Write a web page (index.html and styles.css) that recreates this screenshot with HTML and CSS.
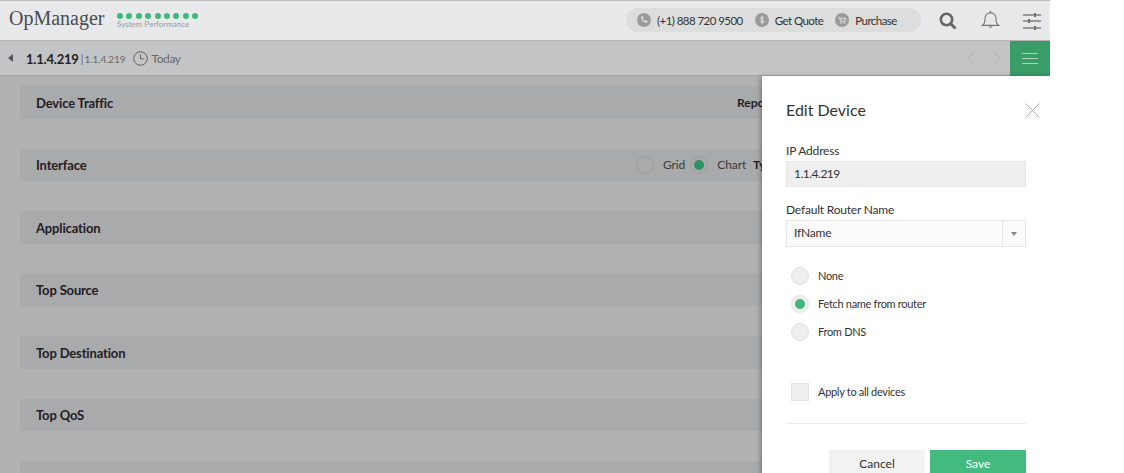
FILE: index.html
```html
<!DOCTYPE html>
<html lang="en">
<head>
<meta charset="utf-8">
<title>OpManager</title>
<link rel="stylesheet" href="styles.css">
</head>
<body>
<div class="app">
  <header class="topbar">
    <div class="logo">OpManager</div>
    <div class="health">
      <div class="dots"><i></i><i></i><i></i><i></i><i></i><i></i><i></i><i></i><i></i></div>
      <div class="health-label">System Performance</div>
    </div>
    <div class="pill">
      <span class="pill-item">
        <svg class="pill-icon" viewBox="0 0 14 14"><circle cx="7" cy="7" r="7" fill="#9b9b9b"/><path d="M4.2 3.6l1.4-.6 1 2-.9.8c.3.9 1.1 1.8 2.1 2.2l.8-.9 2 1-.6 1.5c-3 .6-6.400-2.800-5.800-6z" fill="#e2e2e2"/></svg>
        <span>(+1) 888 720 9500</span>
      </span>
      <span class="pill-item">
        <svg class="pill-icon" viewBox="0 0 14 14"><circle cx="7" cy="7" r="7" fill="#9b9b9b"/><path d="M9 5c-.3-.8-3.600-1.100-3.600.6 0 1.700 3.600.9 3.600 2.700 0 1.700-3.400 1.400-3.800.4M7 2.800v8.400" fill="none" stroke="#e2e2e2" stroke-width="1"/></svg>
        <span>Get Quote</span>
      </span>
      <span class="pill-item">
        <svg class="pill-icon" viewBox="0 0 14 14"><circle cx="7" cy="7" r="7" fill="#9b9b9b"/><path d="M3.300 4.300h1.300l1 4h4.200l.9-3H5" fill="none" stroke="#e2e2e2" stroke-width="1"/><circle cx="6" cy="10" r=".8" fill="#e2e2e2"/><circle cx="9.500" cy="10" r=".8" fill="#e2e2e2"/></svg>
        <span>Purchase</span>
      </span>
    </div>
    <div class="tools">
      <svg class="tool tool-search" viewBox="0 0 18 18"><circle cx="7.500" cy="7.500" r="5.700" fill="none" stroke="#666" stroke-width="2.600"/><path d="M11.800 11.800l4.700 4.700" stroke="#666" stroke-width="3"/></svg>
      <svg class="tool tool-bell" viewBox="0 0 18 18"><path d="M1.500 14.500c1.800-1.500 2.300-3 2.300-6.500 0-3 2-5.300 5.200-5.300s5.200 2.300 5.200 5.300c0 3.500.5 5 2.300 6.500z" fill="none" stroke="#777" stroke-width="1.100"/><path d="M7.200 15.600c.4 1.700 3.200 1.700 3.600 0z" fill="#777"/><path d="M9 .8v2" stroke="#777" stroke-width="1.300"/></svg>
      <svg class="tool tool-sliders" viewBox="0 0 18 18"><path d="M0 3h18M0 9h18M0 16h18" stroke="#808080" stroke-width="1.500"/><path d="M12 1v4M6 7v4M12 14v4" stroke="#707070" stroke-width="2"/></svg>
    </div>
  </header>
  <nav class="subbar">
    <span class="back"></span>
    <strong class="ip">1.1.4.219</strong>
    <span class="sep">|</span>
    <span class="ip-sub">1.1.4.219</span>
    <svg class="clock" viewBox="0 0 15 15"><circle cx="7.500" cy="7.500" r="6.800" fill="none" stroke="#5f6062" stroke-width="1"/><path d="M7.500 3.500v4.300h3" fill="none" stroke="#5f6062" stroke-width="1"/></svg>
    <span class="today">Today</span>
    <div class="pager">
      <svg class="chev" viewBox="0 0 9 16"><path d="M8 1L1 8l7 7" fill="none" stroke="#aeafb1" stroke-width="1"/></svg>
      <svg class="chev" viewBox="0 0 9 16"><path d="M1 1l7 7-7 7" fill="none" stroke="#aeafb1" stroke-width="1"/></svg>
    </div>
    <button class="menu-btn" type="button" aria-label="Menu"><i></i><i></i><i></i></button>
  </nav>
  <main class="content">
    <section class="row"><h3>Device Traffic</h3><div class="row-side side-report"><b>Report</b></div></section>
    <section class="row"><h3>Interface</h3>
      <div class="row-side side-view">
        <span class="radio dim"></span><span class="opt">Grid</span>
        <span class="radio dim on"></span><span class="opt">Chart</span>
        <b>Type</b>
      </div>
    </section>
    <section class="row"><h3>Application</h3></section>
    <section class="row"><h3>Top Source</h3></section>
    <section class="row"><h3>Top Destination</h3></section>
    <section class="row"><h3>Top QoS</h3></section>
    <section class="row"><h3>Top Conversation</h3></section>
  </main>
  <aside class="panel">
    <div class="panel-head">
      <h2>Edit Device</h2>
      <svg class="close" viewBox="0 0 15 15"><path d="M.5.500l14 14M14.500.500l-14 14" stroke="#9a9a9a" stroke-width=".8"/></svg>
    </div>
    <label class="field-label">IP Address</label>
    <div class="input readonly">1.1.4.219</div>
    <label class="field-label second">Default Router Name</label>
    <div class="input select"><span class="select-value">IfName</span><span class="select-arrow"><i></i></span></div>
    <div class="radios">
      <div class="choice"><span class="radio"></span>None</div>
      <div class="choice"><span class="radio on"></span>Fetch name from router</div>
      <div class="choice"><span class="radio"></span>From DNS</div>
    </div>
    <div class="choice apply"><span class="check"></span>Apply to all devices</div>
    <hr class="rule">
    <div class="actions">
      <button class="btn cancel" type="button">Cancel</button>
      <button class="btn save" type="button">Save</button>
    </div>
  </aside>
</div>
</body>
</html>
```
FILE: styles.css
```css
* { box-sizing: border-box; }
html, body { margin: 0; padding: 0; height: 473px; overflow: hidden; background: #fff; }
body { font-family: Lato, "Open Sans", sans-serif; color: #222; }
.app { position: relative; width: 1050px; height: 473px; overflow: hidden; background: #b1b1b1; }

.topbar { height: 41px; display: flex; align-items: center; padding-left: 9px; background: #e8e9ea; border-top: 1px solid #b9b9b9; border-bottom: 1px solid #b5b5b5; }
.logo { flex: none; font-family: "Liberation Serif", serif; font-size: 20px; color: #4a4c50; width: 108px; letter-spacing: 0; margin-top: -4px; }
.health { flex: none; width: 509px; margin-top: 1px; }
.dots { display: flex; gap: 3.400px; }
.dots i { width: 6px; height: 6px; border-radius: 50%; background: #3fb97a; }
.health-label { font-size: 8px; color: #9a9a9a; line-height: 9px; margin-top: 1px; }

.pill { flex: none; width: 295px; height: 24px; margin-top: -1px; border-radius: 12px; background: #dcdddd; display: flex; align-items: center; padding-left: 11px; gap: 12px; }
.pill-item { display: flex; align-items: center; gap: 6px; font-size: 11.500px; color: #333; white-space: nowrap; letter-spacing: -.55px; }
.pill-icon { width: 14px; height: 14px; }
.tools { flex: none; display: flex; align-items: center; margin-left: 18px; gap: 24px; }
.tool { width: 18px; height: 18px; display: block; }
.tool-bell { width: 19px; height: 19px; margin-right: -1px; margin-top: -3px; }

.subbar { height: 35px; display: flex; align-items: center; padding-left: 8px; background: #c3c4c6; border-bottom: 1px solid #a5a5a5; }
.back { width: 0; height: 0; border: 4px solid transparent; border-left: 0; border-right: 5px solid #55565a; margin-right: 13px; }
.ip { font-size: 13px; color: #222; letter-spacing: -.2px; margin-top: 1px; }
.sep { font-size: 11px; color: #666; margin: 1px 1px 0 2px; }
.ip-sub { font-size: 10px; color: #66676a; letter-spacing: -.1px; margin-top: 1px; }
.clock { width: 15px; height: 15px; margin: 1px 0 0 8px; }
.today { font-size: 12px; color: #66676a; margin: 1px 0 0 3px; letter-spacing: -.4px; }
.pager { margin-left: auto; display: flex; gap: 16px; margin-right: 9px; }
.chev { width: 9px; height: 16px; display: block; }
.menu-btn { width: 40px; height: 35px; padding: 0; border: 0; background: #3a9c66; display: flex; flex-direction: column; justify-content: center; align-items: center; gap: 4px; }
.menu-btn i { display: block; width: 16px; height: 1px; background: #a6d5bb; }

.content { padding: 10px 20px 0; display: flex; flex-direction: column; gap: 30px; }
.row { flex: none; height: 32.500px; background: #a9aaac; display: flex; align-items: center; justify-content: space-between; padding-left: 16px; }
.row h3 { margin: 1px 0 0; font-size: 13px; font-weight: 700; color: #1f2022; letter-spacing: -.15px; }
.row-side { display: flex; align-items: center; font-size: 12px; color: #3a3b3d; }
.row-side b { color: #1f2022; }
.side-report { width: 293px; }
.side-view { width: 394px; }
.opt { margin: 0 5px 0 9px; letter-spacing: -.1px; }
.side-view b { margin-left: 2px; }

.panel { position: absolute; left: 762px; top: 76px; width: 288px; height: 420px; padding: 0 24px; background: #fff; box-shadow: -2px 0 4px rgba(0,0,0,.25); }
.panel-head { height: 67px; display: flex; justify-content: space-between; padding-top: 24px; }
.panel-head h2 { margin: 0; font-size: 16px; font-weight: 400; line-height: 20px; color: #333; }
.close { width: 15px; height: 15px; margin: 3px -14px 0 0; }
.field-label { display: block; font-size: 12px; line-height: 15px; color: #333; letter-spacing: -.2px; }
.field-label.second { margin-top: 15px; }
.input { width: 240px; height: 26px; margin-top: 3px; border: 1px solid #e6e6e6; font-size: 12px; line-height: 24px; color: #333; }
.readonly { background: #efefef; padding-left: 7px; letter-spacing: -.5px; }
.select { height: 27px; background: #fbfbfb; display: flex; letter-spacing: -.2px; }
.select-value { flex: 1; padding-left: 7px; }
.select-arrow { width: 23px; border-left: 1px solid #e6e6e6; display: flex; align-items: center; justify-content: center; }
.select-arrow i { width: 0; height: 0; border: 3.500px solid transparent; border-top: 4px solid #888; border-bottom: 0; }

.radios { display: flex; flex-direction: column; gap: 10px; margin-top: 20px; padding-left: 5px; }
.choice { display: flex; align-items: center; gap: 9px; height: 18px; font-size: 11px; line-height: 18px; color: #333; letter-spacing: -.3px; }
.radio { position: relative; display: block; flex: none; width: 18px; height: 18px; border-radius: 50%; background: #efefef; border: 1px solid #e2e2e2; }
.radio.on::after { content: ""; position: absolute; left: 3px; top: 3px; width: 10px; height: 10px; border-radius: 50%; background: #3fb97a; }
.radio.dim { background: #a9aaac; border-color: #9c9d9f; }
.radio.dim.on::after { background: #2c9460; }
.apply { margin-top: 42px; margin-left: 5px; }
.check { display: block; flex: none; width: 18px; height: 18px; background: #efefef; border: 1px solid #e2e2e2; }
.rule { width: 240px; margin: 22px 0 0; border: 0; border-top: 1px solid #ececec; }
.actions { display: flex; justify-content: flex-end; gap: 5px; margin-top: 26px; }
.btn { width: 96px; height: 26px; border: 0; padding: 0; font: 12px Lato, sans-serif; }
.cancel { background: #f2f2f2; color: #333; }
.save { background: #43bb7e; color: #fff; }
```
